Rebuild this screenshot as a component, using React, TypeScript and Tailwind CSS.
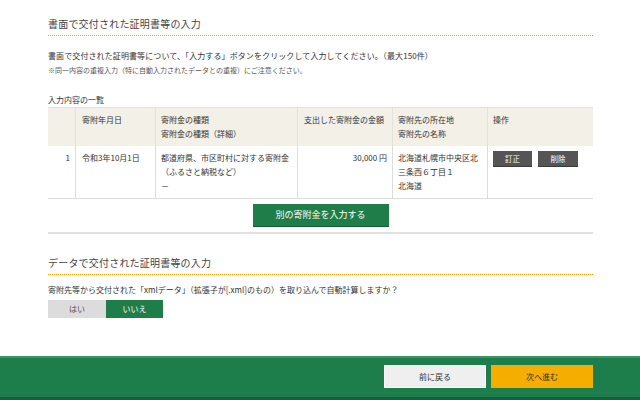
export default function App() {
  const font = { fontFamily: '"Noto Sans CJK JP", "Noto Sans", sans-serif' };
  return (
    <div className="h-[400px] w-[640px] flex flex-col bg-white text-[#333]" style={font}>
      <main className="flex-1 pl-[48px]">
        <div className="w-[545px]">
          {/* 書面 */}
          <div className="pt-[15px]">
            <h2 className="text-[10px] leading-[18px] pb-[2px] text-[#444] tracking-[0.2px]">
              書面で交付された証明書等の入力
            </h2>
            <div className="h-[1px] bg-[repeating-linear-gradient(90deg,#f0a000_0_1px,transparent_1px_2px)]" />
          </div>
          <p className="mt-[13px] text-[8px] leading-[14px] tracking-[0.1px]">
            書面で交付された証明書等について、「入力する」ボタンをクリックして入力してください。（最大150件）
          </p>
          <p className="text-[7px] leading-[14px] text-[#555]">
            ※同一内容の重複入力（特に自動入力されたデータとの重複）にご注意ください。
          </p>
          <p className="mt-[16px] text-[8px] leading-[14px]">入力内容の一覧</p>

          {/* 一覧 */}
          <div className="grid grid-cols-[27px_80px_142px_95px_95px_106px] text-[8px] leading-[14px]">
            <div className="bg-[#f3f0e7] border-t border-[#e6e2d6] py-[5px]" />
            <div className="bg-[#f3f0e7] border-t border-l border-[#e6e2d6] py-[5px] px-[6px]">寄附年月日</div>
            <div className="bg-[#f3f0e7] border-t border-l border-[#e6e2d6] py-[5px] px-[5px]">
              <div>寄附金の種類</div>
              <div>寄附金の種類（詳細）</div>
            </div>
            <div className="bg-[#f3f0e7] border-t border-l border-[#e6e2d6] py-[5px] px-[6px]">支出した寄附金の金額</div>
            <div className="bg-[#f3f0e7] border-t border-l border-[#e6e2d6] py-[5px] px-[5px]">
              <div>寄附先の所在地</div>
              <div>寄附先の名称</div>
            </div>
            <div className="bg-[#f3f0e7] border-t border-l border-[#e6e2d6] py-[5px] px-[5px]">操作</div>

            <div className="border-b border-[#ddd] pt-[5px] pb-[5px] pr-[5px] text-right">1</div>
            <div className="border-b border-l border-[#ddd] pt-[5px] pb-[5px] px-[6px]">令和3年10月1日</div>
            <div className="border-b border-l border-[#ddd] pt-[5px] pb-[5px] px-[5px]">
              <div>都道府県、市区町村に対する寄附金</div>
              <div>（ふるさと納税など）</div>
              <div>－</div>
            </div>
            <div className="border-b border-l border-[#ddd] pt-[5px] pb-[5px] pr-[5px] text-right">30,000 円</div>
            <div className="border-b border-l border-[#ddd] pt-[5px] pb-[5px] px-[5px]">
              <div>北海道札幌市中央区北</div>
              <div>三条西６丁目１</div>
              <div>北海道</div>
            </div>
            <div className="border-b border-l border-[#ddd] pt-[5px] pb-[5px] pl-[5px] flex items-start gap-[6px]">
              <button className="w-[39px] h-[16px] bg-[#555] text-white text-[7.5px] leading-[16px] border-b border-[#3a3a3a]">
                訂正
              </button>
              <button className="w-[40px] h-[16px] bg-[#555] text-white text-[7.5px] leading-[16px] border-b border-[#3a3a3a]">
                削除
              </button>
            </div>
          </div>

          <div className="flex justify-center pt-[5px] pb-[5px] border-b-2 border-[#e2e2e2]">
            <button className="w-[136px] h-[23px] bg-[#1e7d48] text-white text-[9px] border-b border-[#155c35]">
              別の寄附金を入力する
            </button>
          </div>

          {/* データ */}
          <h2 className="mt-[20px] text-[10px] leading-[18px] pb-[2px] text-[#444] tracking-[0.2px]">
            データで交付された証明書等の入力
          </h2>
          <div className="h-[1px] bg-[repeating-linear-gradient(90deg,#f0a000_0_1px,transparent_1px_2px)]" />
          <p className="mt-[8px] text-[8px] leading-[14px]">
            寄附先等から交付された「xmlデータ」（拡張子が[.xml]のもの）を取り込んで自動計算しますか？
          </p>
          <div className="mt-[3px] flex">
            <button className="w-[58px] h-[18px] bg-[#dcdcdc] text-[#555] text-[8px]">はい</button>
            <button className="w-[57px] h-[18px] bg-[#1e7d48] text-white text-[8px]">いいえ</button>
          </div>
        </div>
      </main>

      <footer className="h-[44px] bg-[#1e7e4b] border-t-2 border-[#3b9466] border-b-[3px] border-b-[#13613a] flex justify-end items-start pt-[7px] pr-[47px] gap-[5px]">
        <button className="w-[102px] h-[23px] bg-[#efefef] border border-white text-[8px] text-[#333]">前に戻る</button>
        <button className="w-[102px] h-[23px] bg-[#f5ad00] text-[8px] text-[#333]">次へ進む</button>
      </footer>
    </div>
  );
}
